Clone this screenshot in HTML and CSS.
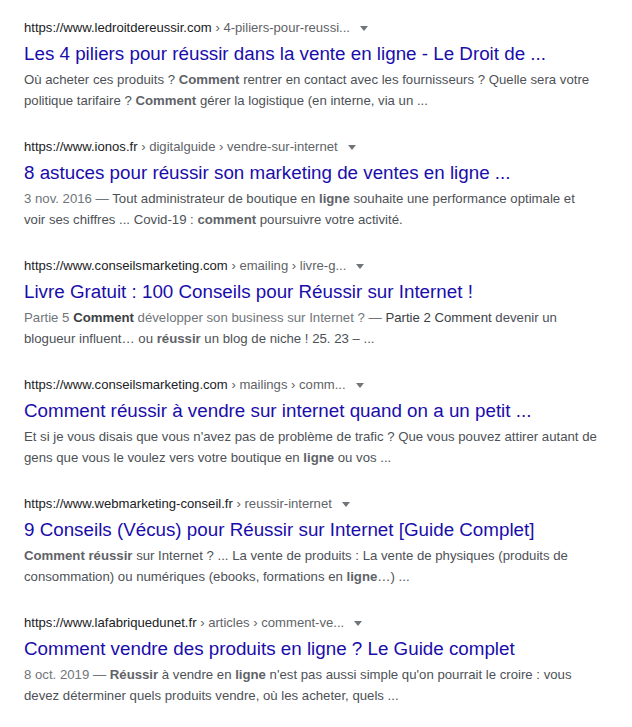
FILE: index.html
```html
<!DOCTYPE html>
<html lang="fr">
<head>
<meta charset="utf-8">
<title>Résultats</title>
<link rel="stylesheet" href="styles.css">
</head>
<body>
<div class="results">
  <div class="result">
    <div class="url">https://www.ledroitdereussir.com<span class="crumb"> › 4-piliers-pour-reussi...</span><span class="arrow"></span></div>
    <h3 class="title">Les 4 piliers pour réussir dans la vente en ligne - Le Droit de ...</h3>
    <div class="snippet">Où acheter ces produits ? <b>Comment</b> rentrer en contact avec les fournisseurs ? Quelle sera votre politique tarifaire ? <b>Comment</b> gérer la logistique (en interne, via un ...</div>
  </div>
  <div class="result">
    <div class="url">https://www.ionos.fr<span class="crumb"> › digitalguide › vendre-sur-internet</span><span class="arrow"></span></div>
    <h3 class="title">8 astuces pour réussir son marketing de ventes en ligne ...</h3>
    <div class="snippet"><span class="date">3 nov. 2016 — </span>Tout administrateur de boutique en <b>ligne</b> souhaite une performance optimale et voir ses chiffres ... Covid-19 : <b>comment</b> poursuivre votre activité.</div>
  </div>
  <div class="result">
    <div class="url">https://www.conseilsmarketing.com<span class="crumb"> › emailing › livre-g...</span><span class="arrow"></span></div>
    <h3 class="title">Livre Gratuit : 100 Conseils pour Réussir sur Internet !</h3>
    <div class="snippet"><span class="date">Partie 5 <b class="strong">Comment</b> développer son business sur Internet ? — </span><span class="dark">Partie 2 Comment</span> devenir un blogueur influent… ou <b>réussir</b> un blog de niche ! 25. 23 – ...</div>
  </div>
  <div class="result">
    <div class="url">https://www.conseilsmarketing.com<span class="crumb"> › mailings › comm...</span><span class="arrow"></span></div>
    <h3 class="title">Comment réussir à vendre sur internet quand on a un petit ...</h3>
    <div class="snippet">Et si je vous disais que vous n'avez pas de problème de trafic ? Que vous pouvez attirer autant de gens que vous le voulez vers votre boutique en <b>ligne</b> ou vos ...</div>
  </div>
  <div class="result">
    <div class="url">https://www.webmarketing-conseil.fr<span class="crumb"> › reussir-internet</span><span class="arrow"></span></div>
    <h3 class="title">9 Conseils (Vécus) pour Réussir sur Internet [Guide Complet]</h3>
    <div class="snippet"><b>Comment réussir</b> sur Internet ? ... La vente de produits : La vente de physiques (produits de consommation) ou numériques (ebooks, formations en <b>ligne</b>…) ...</div>
  </div>
  <div class="result">
    <div class="url">https://www.lafabriquedunet.fr<span class="crumb"> › articles › comment-ve...</span><span class="arrow"></span></div>
    <h3 class="title">Comment vendre des produits en ligne ? Le Guide complet</h3>
    <div class="snippet"><span class="date">8 oct. 2019 — </span><b>Réussir</b> à vendre en <b>ligne</b> n'est pas aussi simple qu'on pourrait le croire : vous devez déterminer quels produits vendre, où les acheter, quels ...</div>
  </div>
</div>
</body>
</html>
```

FILE: styles.css
```css
html, body {
  margin: 0;
  background: #ffffff;
}
body {
  font-family: "Liberation Sans", Arial, sans-serif;
}
.results {
  padding: 19px 0 0 24px;
  width: 575px;
}
.result {
  margin-bottom: 27.5px;
}
.url {
  font-size: 13.1px;
  line-height: 18px;
  color: #202124;
  white-space: nowrap;
  display: flex;
  align-items: center;
}
.crumb {
  color: #5f6368;
  white-space: pre;
}
.arrow {
  width: 0;
  height: 0;
  border-left: 4px solid transparent;
  border-right: 4px solid transparent;
  border-top: 5px solid #70757a;
  margin-left: 10px;
  margin-top: 1px;
}
.title {
  margin: 5px 0 2.5px;
  font-size: 18.8px;
  line-height: 24px;
  font-weight: normal;
  color: #1a0dab;
  white-space: nowrap;
}
.snippet {
  font-size: 13.2px;
  line-height: 21px;
  color: #4d5156;
}
.snippet b {
  color: #5f6368;
  font-weight: bold;
}
.snippet b.strong {
  color: #3c4043;
}
.dark {
  color: #3c4043;
}
.date {
  color: #70757a;
}
```
